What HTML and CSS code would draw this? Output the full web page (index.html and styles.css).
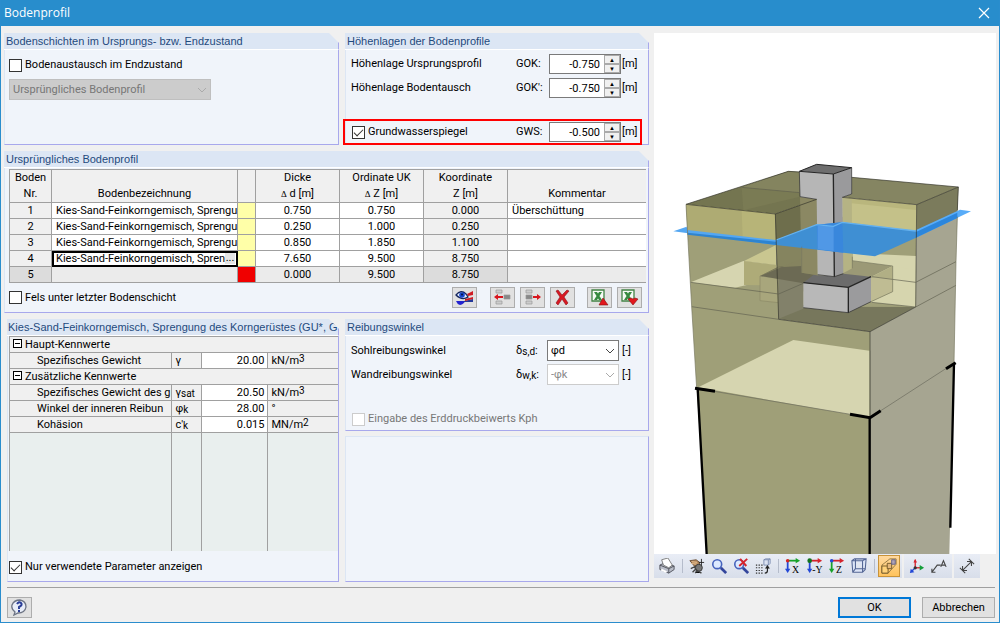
FILE: index.html
```html
<!DOCTYPE html>
<html lang="de">
<head>
<meta charset="utf-8">
<title>Bodenprofil</title>
<link rel="stylesheet" href="styles.css">
</head>
<body>
<div class="window">
  <header class="titlebar">
    <h1>Bodenprofil</h1>
    <button class="close" aria-label="Schließen"><svg width="12" height="12" viewBox="0 0 12 12"><path d="M1 1l10 10M11 1L1 11" stroke="#fff" stroke-width="1.2"/></svg></button>
  </header>

  <main class="content">
    <div class="settings">
      <div class="row row-top">
        <section class="panel">
          <h2>Bodenschichten im Ursprungs- bzw. Endzustand</h2>
          <div class="panel-body stack">
            <label class="check"><input type="checkbox">Bodenaustausch im Endzustand</label>
            <div class="dropdown profile-select">
              <select aria-label="Bodenprofil" disabled><option>Ursprüngliches Bodenprofil</option></select>
              <svg width="10" height="6" viewBox="0 0 10 6"><path d="M1 1l4 4 4-4"/></svg>
            </div>
          </div>
        </section>

        <section class="panel">
          <h2>Höhenlagen der Bodenprofile</h2>
          <div class="panel-body levels">
            <div class="field">
              <span>Höhenlage Ursprungsprofil</span>
              <label for="gok">GOK:</label>
              <div class="spin"><input id="gok" type="text" value="-0.750"><button aria-label="GOK erhöhen">▲</button><button aria-label="GOK verringern">▼</button></div>
              <span>[m]</span>
            </div>
            <div class="field">
              <span>Höhenlage Bodentausch</span>
              <label for="gok2">GOK':</label>
              <div class="spin"><input id="gok2" type="text" value="-0.750"><button aria-label="GOK' erhöhen">▲</button><button aria-label="GOK' verringern">▼</button></div>
              <span>[m]</span>
            </div>
            <div class="field marked">
              <label class="check"><input type="checkbox" checked>Grundwasserspiegel</label>
              <label for="gws">GWS:</label>
              <div class="spin"><input id="gws" type="text" value="-0.500"><button aria-label="GWS erhöhen">▲</button><button aria-label="GWS verringern">▼</button></div>
              <span>[m]</span>
            </div>
          </div>
        </section>
      </div>

      <section class="panel">
        <h2>Ursprüngliches Bodenprofil</h2>
        <div class="panel-body profile">
          <table class="layers">
            <colgroup><col class="c-nr"><col class="c-name"><col class="c-color"><col class="c-num"><col class="c-num"><col class="c-num"><col></colgroup>
            <thead>
              <tr><th>Boden<br>Nr.</th><th>Bodenbezeichnung</th><th></th><th>Dicke<br><i>Δ</i> d [m]</th><th>Ordinate UK<br><i>Δ</i> Z [m]</th><th>Koordinate<br>Z [m]</th><th>Kommentar</th></tr>
            </thead>
            <tbody>
              <tr><th>1</th><td class="name">Kies-Sand-Feinkorngemisch, Sprengu</td><td class="sand"></td><td>0.750</td><td>0.750</td><td class="locked">0.000</td><td class="note">Überschüttung</td></tr>
              <tr><th>2</th><td class="name">Kies-Sand-Feinkorngemisch, Sprengu</td><td class="sand"></td><td>0.250</td><td>1.000</td><td class="locked">0.250</td><td class="note"></td></tr>
              <tr><th>3</th><td class="name">Kies-Sand-Feinkorngemisch, Sprengu</td><td class="sand"></td><td>0.850</td><td>1.850</td><td class="locked">1.100</td><td class="note"></td></tr>
              <tr><th>4</th><td class="name current"><div><span>Kies-Sand-Feinkorngemisch, Spren</span><button aria-label="Boden auswählen">...</button></div></td><td class="sand"></td><td>7.650</td><td>9.500</td><td class="locked">8.750</td><td class="note"></td></tr>
              <tr class="last"><th>5</th><td></td><td class="rock"></td><td>0.000</td><td>9.500</td><td class="locked">8.750</td><td></td></tr>
            </tbody>
          </table>
          <div class="table-tools">
            <label class="check"><input type="checkbox">Fels unter letzter Bodenschicht</label>
            <div class="tools">
              <button class="tool" aria-label="Bodenschichten anzeigen"><svg width="19" height="17" viewBox="0 0 19 17"><path d="M1 12h9q-1 3-5 4-3-1-4-4z" fill="#2222d0"/><path d="M9 12l9-2v3H8z" fill="#24389a"/><path d="M12 5l6-3v4l-5 1zM10 10l8-2v2l-8 2z" fill="#d01c24"/><path d="M1 6q5-6 10-1l2 3q-6 4-12-2z" fill="#e8f3ff" stroke="#17275e" stroke-width="1.300"/><circle cx="7" cy="6" r="2.800" fill="#1745cf"/><circle cx="7" cy="5.500" r="1" fill="#061337"/></svg></button>
              <button class="tool gap-l" aria-label="Zeile einfügen"><svg width="19" height="17" viewBox="0 0 19 17"><g fill="#ccc" stroke="#999" stroke-width=".7"><path d="M3 1h6v3H3zM3 12h6v3H3z"/><path d="M11 6h6v4h-6z" fill="#888"/></g><path d="M1 8l4-3v2h5v2H5v2z" fill="#d8151d"/></svg></button>
              <button class="tool" aria-label="Zeile entfernen"><svg width="19" height="17" viewBox="0 0 19 17"><g fill="#ccc" stroke="#999" stroke-width=".7"><path d="M3 1h6v3H3zM3 12h6v3H3z"/><path d="M3 6h6v4H3z" fill="#888"/></g><path d="M18 8l-4-3v2h-4v2h4v2z" fill="#d8151d"/></svg></button>
              <button class="tool" aria-label="Löschen"><svg width="19" height="17" viewBox="0 0 19 17"><path d="M3 2l2-1 4 5 5-5 2 1-5 6 4 6-2 2-4-6-4 6-2-2 4-6z" fill="#d91822" stroke="#8b1118" stroke-width=".6"/></svg></button>
              <button class="tool gap-m" aria-label="Nach Excel exportieren"><svg width="19" height="17" viewBox="0 0 19 17"><path d="M2 1h12v11H2z" fill="#f6fbf5" stroke="#438346" stroke-width="1.300"/><path d="M4 3h3l5 8H9zM9 3h3l-5 8H4z" fill="#378a40"/><path d="M9 16l4-7 5 7z" fill="#e2171d" stroke="#861015" stroke-width=".6"/></svg></button>
              <button class="tool" aria-label="Aus Excel importieren"><svg width="19" height="17" viewBox="0 0 19 17"><path d="M2 1h12v11H2z" fill="#f6fbf5" stroke="#438346" stroke-width="1.300"/><path d="M4 3h3l5 8H9zM9 3h3l-5 8H4z" fill="#378a40"/><path d="M8 10l3-1 2 1 2-1 3 1-5 6z" fill="#e2171d" stroke="#861015" stroke-width=".6"/></svg></button>
            </div>
          </div>
        </div>
      </section>

      <div class="row row-bottom">
        <section class="panel params">
          <h2>Kies-Sand-Feinkorngemisch, Sprengung des Korngerüstes (GU*, GT</h2>
          <div class="panel-body">
            <table class="values">
              <colgroup><col><col class="v-sym"><col class="v-num"><col class="v-unit"></colgroup>
              <tbody>
                <tr><th colspan="4"><span class="minus"></span>Haupt-Kennwerte</th></tr>
                <tr><td>Spezifisches Gewicht</td><td class="sym">γ</td><td class="num">20.00</td><td>kN/m<sup>3</sup></td></tr>
                <tr><th colspan="4"><span class="minus"></span>Zusätzliche Kennwerte</th></tr>
                <tr><td>Spezifisches Gewicht des g</td><td class="sym">γ<sub>sat</sub></td><td class="num">20.50</td><td>kN/m<sup>3</sup></td></tr>
                <tr><td>Winkel der inneren Reibun</td><td class="sym">φ<sub>k</sub></td><td class="num">28.00</td><td>°</td></tr>
                <tr><td>Kohäsion</td><td class="sym">c'<sub>k</sub></td><td class="num">0.015</td><td>MN/m<sup>2</sup></td></tr>
                <tr class="rest"><td></td><td></td><td></td><td></td></tr>
              </tbody>
            </table>
            <label class="check"><input type="checkbox" checked>Nur verwendete Parameter anzeigen</label>
          </div>
        </section>

        <div class="side">
          <section class="panel friction">
            <h2>Reibungswinkel</h2>
            <div class="panel-body levels">
              <div class="field">
                <span>Sohlreibungswinkel</span>
                <label for="sd">δ<sub>s,d</sub>:</label>
                <div class="dropdown">
                  <select id="sd"><option>φd</option></select>
                  <svg width="10" height="6" viewBox="0 0 10 6"><path d="M1 1l4 4 4-4"/></svg>
                </div>
                <span>[-]</span>
              </div>
              <div class="field">
                <span>Wandreibungswinkel</span>
                <label for="wk">δ<sub>w,k</sub>:</label>
                <div class="dropdown">
                  <select id="wk" disabled><option>-φk</option></select>
                  <svg width="10" height="6" viewBox="0 0 10 6"><path d="M1 1l4 4 4-4"/></svg>
                </div>
                <span>[-]</span>
              </div>
              <label class="check kph"><input type="checkbox" disabled>Eingabe des Erddruckbeiwerts Kph</label>
            </div>
          </section>
          <section class="panel empty"></section>
        </div>
      </div>
    </div>

    <div class="preview">
      <svg class="model" viewBox="12 -348 1026 1560" preserveAspectRatio="xMidYMax meet" role="img" aria-label="3D-Ansicht des Fundaments im Boden">
        <path fill="#9f9f78" d="M108 163L376 192 386 508 660 545V1212H172L140 715 125 470z"/>
        <path fill="#a6a591" d="M660 545L797 471 800 164 925 111 918 335 912 640 898 1212H660z"/>
        <path fill="#7b7b5c" d="M800 164L925 111 922 195 800 250z"/>
        <path fill="#d6d5b0" d="M122 397L280 333 385 345V383L255 413z"/>
        <path fill="#9f9f78" d="M577 200L798 230V471L386 508V290z"/>
        <path fill="#d6d5ae" d="M608 309L798 318V471L665 457 608 420z"/>
        <path fill="#77775c" d="M386 420L470 470 797 471 660 545 386 508z"/>
        <path fill="#d6d5ae" d="M728 348L797 360V471L665 456 728 425z"/>
        <path fill="#747550" d="M108 163L415 64 450 66V140L500 148 376 192z"/>
        <path fill="#84845f" d="M275 112L415 64 450 66V128z"/>
        <path fill="#7f7e57" d="M275 112L450 128V140L280 181z" opacity=".6"/>
        <path fill="#858562" d="M605 82L925 111 800 164 577 142 605 132z"/>
        <path fill="#aeab73" d="M108 163L376 192V272L112 245z"/>
        <path fill="#b7b478" d="M275 181L376 192V272L278 262z"/>
        <path fill="#b9b67d" d="M577 142L800 164V245L577 217z"/>
        <path fill="#c4c189" d="M605 160L798 180V243L605 218z"/>
        <path fill="#c9c690" d="M282 333L378 285V345z"/>
        <path fill="#aeab78" d="M282 333L380 345V377L330 379V406L282 405z"/>
        <path fill="#85845f" d="M376 192L500 148V380L386 508z"/>
        <path fill="#6e6e4c" d="M376 192L500 148V225L378 272z"/>
        <path fill="#a8a67c" d="M330 378L385 384V458L330 452z" stroke="#8b8966" stroke-width="2"/>
        <path fill="#82816a" d="M385 384L460 397V476L386 506z"/>
        <path fill="#6c6a54" d="M330 378L385 350 455 346V368L500 375 460 400z"/>
        <path fill="#85835f" d="M330 378L455 326V348L385 352z"/>
        <path fill="#9b9976" d="M606 332L728 348 663 381 555 374z"/>
        <path fill="#b1af85" d="M663 381L728 348V425L663 455z"/>
        <path fill="#c4c298" d="M675 380L728 386V425L663 455V384z" opacity=".7"/>
        <path fill="#b8b8b8" d="M460 398L595 412V488L460 473z"/>
        <path fill="#9b9b9d" d="M595 412L663 380V455L595 488z"/>
        <path fill="#6c6c6c" d="M490 375L553 379 580 371 663 380 595 412 460 398z"/>
        <path fill="#8b8863" d="M450 140L500 148 503 376 455 368z"/>
        <path fill="#b5b384" d="M577 142L605 150 607 355 579 370z"/>
        <path fill="#b6b6b6" d="M448 64L550 72 553 380 503 375 500 148 450 141z"/>
        <path fill="#9a9a9c" d="M550 72L605 53V132L577 142 580 370 553 380z"/>
        <path fill="#6e6e6e" stroke="#252525" stroke-width="3" d="M448 64L500 43 605 53 550 72z"/>
        <g fill="none" stroke="#252525" stroke-width="4"><path d="M550 72L553 380M460 398L595 412 663 380M595 412V488"/><path stroke-width="2" d="M448 64L450 140 500 148M605 53V132L577 142M503 374L553 380 580 371M460 473L595 488 663 455"/></g>
        <path fill="#54a7f2" d="M70 244L110 230 112 240 378 270V285z"/>
        <path fill="#2e84d0" d="M112 248L378 275V285L112 254z"/>
        <path fill="#3f8fd3" d="M378 270L500 224 577 217 798 243V263L675 319 378 285z"/>
        <path fill="#3987dc" d="M500 224L577 217 580 308 503 298z"/>
        <path fill="#5098e6" d="M503 228H551V303L503 298z"/>
        <path fill="#58acf8" d="M798 240L930 179 963 184 798 263z"/>
        <path fill="#2c86dc" d="M798 246L922 188V204L798 263z"/>
        <path fill="none" stroke="#65b2f0" stroke-width="4" d="M378 270L500 224 550 229 577 217 798 243"/>
        <g fill="none" stroke="#33332a" stroke-width="2">
          <path d="M108 163L376 192 500 148M108 163L415 64 448 66M605 82L925 111 800 164 577 142M376 192L386 508M800 164L797 471M925 111L922 180M386 508L660 545 797 471"/>
          <path stroke="#606050" d="M122 397L386 432 460 400M125 470L386 508M797 397L918 335M797 471L918 406M275 112L450 128M665 380L797 397M665 457L797 471"/>
          <path stroke="#77775f" d="M108 163L125 470 140 715M922 200L918 335 912 640M455 368V290M607 355V320M606 332L728 348V425L663 455"/>
          <path d="M660 545V800"/>
        </g>
        <path fill="#d6d5b0" d="M145 712L430 570 658 602V803z"/>
        <path fill="none" stroke="#69695c" stroke-width="2" d="M140 715L660 803 912 640M660 602V803"/>
        <path fill="none" stroke="#000" stroke-width="7" d="M143 715L170 1212M659 800V1212M912 640L901 1133"/>
        <path fill="none" stroke="#000" stroke-width="9" d="M135 715L195 724M600 793L660 803 692 782M888 656L917 638"/>
      </svg>
      <div class="viewbars">
        <div class="viewbar">
          <button aria-label="Drucken"><svg viewBox="0 0 18 18"><path d="M1 8l4-2 12 3v4l-6 4L1 13z" fill="#b9bdc8" stroke="#4a4d56"/><path d="M1 8l10 4v5M11 12l6-3" fill="none" stroke="#4a4d56"/><path d="M5 8L3 2l7-2 5 8-4 3z" fill="#fff" stroke="#777"/><path d="M3 12l6 3-1 2-6-3z" fill="#fff"/></svg></button>
          <i class="sep"></i>
          <button aria-label="Verschieben"><svg viewBox="0 0 18 18"><path d="M1 3l7-1 4 3-1 5-5-1z" fill="#b98d5f" stroke="#65482f"/><path d="M3 4l6 1M2 6l7 1" stroke="#e4bd91"/><path d="M14 1v9M11 5h6" stroke="#222"/><circle cx="11" cy="11" r="4" fill="#777" stroke="#333"/><path d="M6 10l4 6M2 12l6-3M7 17l2-3 5 3M4 16l3-3" stroke="#444" stroke-width="1.500"/></svg></button>
          <button aria-label="Zoom"><svg viewBox="0 0 18 18"><path d="M11 11l6 6" stroke="#33459c" stroke-width="3"/><circle cx="7" cy="7" r="5" fill="#dce9ff" stroke="#4663bd" stroke-width="1.800"/></svg></button>
          <button aria-label="Zoom zurücksetzen"><svg viewBox="0 0 18 18"><path d="M11 11l6 6" stroke="#33459c" stroke-width="3"/><circle cx="7" cy="7" r="5" fill="#dce9ff" stroke="#4663bd" stroke-width="1.800"/><path d="M8 1l7 8M16 1L7 9" stroke="#d5242c" stroke-width="2.200"/></svg></button>
          <button aria-label="Raster"><svg viewBox="0 0 18 18"><path d="M1 8h8M1 11h8M1 14h8M1 17h8" stroke="#333" stroke-width="1.200" stroke-dasharray="1.500 1.500"/><path d="M10 2l2-1h5v5l-2 2h-5zM10 2h5v6M15 2l2-1" fill="#dbe2f2" stroke="#7788ae"/><path d="M14 10v4q0 3-3 3M12 12l2-3 2 3" fill="none" stroke="#222" stroke-width="1.300"/></svg></button>
          <i class="sep"></i>
          <button aria-label="Ansicht in X"><svg viewBox="0 0 18 18"><path d="M3 3h10" stroke="#18a22b" stroke-width="2"/><path d="M12 0l5 3-5 3z" fill="#18a22b"/><path d="M3 3v10" stroke="#2348d6" stroke-width="2"/><path d="M0 12l3 5 3-5z" fill="#2348d6"/><circle cx="3" cy="3" r="2" fill="#d62323"/><text x="8" y="17">X</text></svg></button>
          <button aria-label="Ansicht in -Y"><svg viewBox="0 0 18 18"><path d="M3 3h10" stroke="#d6232d" stroke-width="2"/><path d="M12 0l5 3-5 3z" fill="#d6232d"/><path d="M3 3v10" stroke="#2348d6" stroke-width="2"/><path d="M0 12l3 5 3-5z" fill="#2348d6"/><circle cx="3" cy="3" r="2.600" fill="#12731d"/><text x="6" y="17">-Y</text></svg></button>
          <button aria-label="Ansicht in Z"><svg viewBox="0 0 18 18"><path d="M3 3h10" stroke="#d6232d" stroke-width="2"/><path d="M12 0l5 3-5 3z" fill="#d6232d"/><path d="M3 3v10" stroke="#18a22b" stroke-width="2"/><path d="M0 12l3 5 3-5z" fill="#18a22b"/><circle cx="3" cy="3" r="2" fill="#2348d6"/><text x="8" y="17">Z</text></svg></button>
          <button aria-label="Isometrie"><svg viewBox="0 0 18 18"><path d="M1 3l3-2h13l-1 12-3 3H2zM1 3h12l4-2M13 3v13M5 1v11h11M5 12l-3 4" fill="#dce5f7" stroke="#536594" stroke-width="1.200"/></svg></button>
          <i class="sep"></i>
          <button class="active" aria-label="Transparente Darstellung"><svg viewBox="0 0 18 18"><path d="M1 8l9-7h7v6l-9 10H1z" fill="none" stroke="#8c7340"/><path d="M1 9h7v8H1z" fill="#ffd27a" stroke="#6e5425"/><path d="M7 6h5v6H7z" fill="#e5b87c" stroke="#6e5425"/><path d="M12 2h4v5h-4z" fill="#b1a4b5" stroke="#5c5c8a"/></svg></button>
        </div>
        <div class="viewbar">
          <button aria-label="Achsen"><svg viewBox="0 0 18 18"><path d="M7 11V2" stroke="#d6232d" stroke-width="1.500"/><path d="M5 5l2-4 2 4z" fill="#d6232d"/><path d="M7 11h7" stroke="#d6232d" stroke-width="1.500"/><path d="M12 8l5 3-5 3z" fill="#159e3b"/><path d="M7 11l-4 4" stroke="#2348d6" stroke-width="1.500"/><path d="M1 17l1-5 4 4z" fill="#2348d6"/><circle cx="7" cy="11" r="1.800" fill="#333"/></svg></button>
          <button aria-label="Beschriftung"><svg viewBox="0 0 18 18"><path d="M1 16l6-8h4M1 12v4h4" fill="none" stroke="#444" stroke-width="1.300"/><path d="M11 10l3-7 3 7M12 8h4" fill="none" stroke="#444" stroke-width="1.200"/></svg></button>
        </div>
        <div class="viewbar">
          <button aria-label="Bemaßung"><svg viewBox="0 0 18 18"><path d="M4 14L14 4M4 9v5h5M9 4h5v5M1 11l6 6M11 1l6 6" fill="none" stroke="#444" stroke-width="1.200"/></svg></button>
        </div>
      </div>
    </div>
  </main>

  <footer class="footer">
    <button class="tool" aria-label="Hilfe"><svg width="19" height="17" viewBox="0 0 19 17"><path d="M4 16l1-3q-4-3-3-7 2-5 8-5 6 1 6 7-1 6-8 6z" fill="#e8edf8" stroke="#6d7484" stroke-width="1.300"/><path d="M7 5q2-3 4-1t-2 4v2M9 11v2" fill="none" stroke="#2a3e97" stroke-width="2"/></svg></button>
    <div class="actions">
      <button class="ok">OK</button>
      <button>Abbrechen</button>
    </div>
  </footer>
</div>
</body>
</html>
```
FILE: styles.css
```css
* { box-sizing: border-box; }

body {
  margin: 0;
  font: 11px/14px Roboto, "Liberation Sans", sans-serif;
  color: #000;
  background: #f0f0f0;
}

button, input, select { font: inherit; color: inherit; margin: 0; border-radius: 0; }
button { padding: 0; }
h1, h2 { margin: 0; font-weight: 400; }
svg { display: block; }

.window {
  display: flex;
  flex-direction: column;
  min-height: 100vh;
  border: 1px solid #2a8dcd;
  border-top: 0;
}

.titlebar {
  display: flex;
  align-items: center;
  justify-content: space-between;
  height: 26px;
  padding: 0 9px 0 3px;
  color: #fff;
  background: #288dcc;
}
.titlebar h1 { font: 12px/16px "Open Sans", sans-serif; }
.close { border: 0; background: none; }

.content {
  flex: 1;
  display: grid;
  grid-template-columns: minmax(0, 645fr) minmax(0, 342fr);
  gap: 5px;
  padding: 7px 3px 5px;
}
.settings { display: flex; flex-direction: column; gap: 6px; }
.row { display: grid; gap: 6px; }
.row-top { grid-template-columns: minmax(0, 335fr) minmax(0, 304fr); }
.row-bottom { flex: 1; grid-template-columns: minmax(0, 335fr) minmax(0, 304fr); }
.side { display: flex; flex-direction: column; gap: 5px; }

.panel { display: flex; flex-direction: column; min-width: 0; }
.panel h2 {
  height: 17px;
  padding: 0 3px 0 2px;
  overflow: hidden;
  font: 11px/17px "Liberation Sans", sans-serif;
  white-space: nowrap;
  color: #1f4a7d;
  background: #dce6f4;
  border-right: 1px solid #a8a8ec;
  border-bottom: 1px solid #fff;
  clip-path: polygon(0 0, calc(100% - 10px) 0, 100% 10px, 100% 100%, 0 100%);
}
.panel-body {
  flex: 1;
  background: #f0f4fa;
  border: solid #a8a8ec;
  border-width: 0 1px 1px 0;
  border-left: 1px solid #dce6f4;
}
.empty { flex: 1; background: #f0f4fa; border: 1px solid #a8a8ec; border-top-color: #dce6f4; border-left-color: #dce6f4; }

.stack { display: flex; flex-direction: column; gap: 7px; padding: 8px 4px; }
.check { display: flex; align-items: center; gap: 3px; white-space: nowrap; }
.check input, .minus { flex: none; appearance: none; }
.check input { width: 13px; height: 13px; border: 1px solid #333; background: #fff; display: grid; place-items: center; }
.check input:checked::before { content: ""; width: 8px; height: 4px; border: solid #333; border-width: 0 0 1px 1px; rotate: -45deg; margin-bottom: 2px; }
.check input:disabled { border-color: #ccc; }
.check:has(input:disabled) { color: #777; }

.dropdown { position: relative; height: 21px; }
.dropdown select {
  display: block;
  width: 100%;
  height: 100%;
  padding: 0 3px;
  appearance: none;
  border: 1px solid #7a7a7a;
  background: #fff;
}
.dropdown svg { position: absolute; right: 4px; top: 8px; fill: none; stroke: #444; pointer-events: none; }
.dropdown select:disabled { color: #888; opacity: 1; border-color: #ccc; }
.dropdown select:disabled + svg { stroke: #aaa; }
.profile-select { width: 62%; }
.profile-select select:disabled { color: #777; background: #ccc; border-color: #bfbfbf; }

.levels { display: flex; flex-direction: column; gap: 4px; padding: 4px 0 2px 5px; }
.field { display: grid; grid-template-columns: 1fr 33px 72px 27px; align-items: center; }
.field > :last-child { padding-left: 1px; }
.marked { margin: 20px 9px 0 -5px; padding-left: 5px; outline: 2px solid #f00; outline-offset: 1px; grid-template-columns: 1fr 33px 72px 18px; }
.levels .check { padding-left: 1px; }
.spin {
  display: grid;
  grid-template-columns: 1fr 16px;
  grid-template-rows: 9px 9px;
  height: 20px;
  border: 1px solid #7a7a7a;
  background: #f0f0f0;
}
.spin input { grid-row: 1 / 3; width: 100%; height: 18px; padding: 0 4px; border: 0; text-align: right; background: #fff; }
.spin button { border: 1px solid #aaa; background: #f0f0f0; font-size: 6px; line-height: 6px; overflow: hidden; }

table { border-collapse: collapse; table-layout: fixed; width: 100%; }
.profile { padding: 1px 2px 4px 4px; }
.layers { background: #fff; }
.layers th, .layers td { height: 16px; padding: 0; border: 1px solid #a0a0a0; font-weight: 400; text-align: center; line-height: 15px; white-space: nowrap; overflow: hidden; }
.layers tr > :last-child { border-right: 0; }
.layers th { background: #f0f0f0; }
.layers thead th { height: 33px; vertical-align: bottom; line-height: 16px; }
.layers i { font: 9px "Liberation Serif", serif; }
.layers .name, .layers .note { text-align: left; padding-left: 4px; }
.layers .locked { background: #f0f0f0; }
.layers .sand { background: #ffffa8; }
.layers .last td { background: #ebebeb; }
.layers .last th, .layers .last .locked { background: #dcdcdc; }
.layers .last .rock { background: #f00000; }
.layers .current { outline: 2px solid #000; outline-offset: -2px; }
.current div { display: flex; padding-right: 2px; }
.current span { flex: 1; }
.current button { width: 11px; height: 13px; border: 0; background: #e4e4e4; line-height: 8px; }
.c-nr { width: 42px; }
.c-name { width: 186px; }
.c-color { width: 18px; }
.c-num { width: 84px; }

.table-tools, .tools { display: flex; align-items: center; }
.table-tools { justify-content: space-between; padding: 4px 4px 0 0; }
.tools { gap: 5px; }
.tool { display: grid; place-items: center; width: 25px; height: 21px; border: 1px solid #adadad; background: #e1e1e1; }
.gap-l { margin-left: 8px; }
.gap-m { margin-left: 7px; }

.params { margin-left: 3px; }
.params h2 { padding: 0 0 0 1px; }
.params .panel-body { display: flex; flex-direction: column; justify-content: space-between; }
.values { margin-left: 1px; width: calc(100% - 1px); }
.values th, .values td { height: 16px; padding: 0 3px; border: 1px solid #a0a0a0; border-right: 0; background: #f0f0f0; font-weight: 400; text-align: left; line-height: 15px; white-space: nowrap; overflow: hidden; }
.values td:first-child { padding-left: 27px; }
.values .num { text-align: right; background: #fff; }
.values .rest td { height: 118px; background: #e9efee; border-bottom: 0; }
.v-sym { width: 30px; }
.v-num { width: 66px; }
.v-unit { width: 70px; }
.minus { display: inline-block; width: 9px; height: 9px; margin-right: 3px; border: 1px solid #000; background: linear-gradient(#000, #000) center / 5px 1px no-repeat #fff; }
sub, sup { font-size: 10px; line-height: 0; }
sub { vertical-align: -1px; }
sup { vertical-align: 2px; }
.params .check { padding: 0 0 7px 1px; }

.friction .field { grid-template-columns: 1fr 31px 72px 29px; }
.friction .field > :last-child { padding-left: 3px; }
.friction .levels { gap: 3px; }
.kph { margin: 24px 0 2px; }

.preview { display: flex; flex-direction: column; padding-bottom: 4px; }
.model { flex: 1; min-height: 0; width: 100%; background: #fff; }
.viewbars { display: flex; gap: 2px; }
.viewbar { display: flex; align-items: center; height: 24px; padding: 0 2px; background: linear-gradient(#e9edf6, #d8deea); }
.viewbar button { display: grid; place-items: center; width: 22px; height: 22px; border: 0; background: none; }
.viewbar svg { width: 16px; height: 16px; }
.viewbar text { font: 11px "Liberation Serif", serif; }
.viewbar .active { border: 1px solid #c8933a; background: linear-gradient(#ffd9a0, #ffc35c); }
.sep { width: 1px; height: 14px; margin: 0 3px 0 4px; background: #b5bccb; }

.footer {
  display: flex;
  justify-content: space-between;
  margin: 0 4px 0 6px;
  padding: 9px 0 4px;
  border-top: 1px solid #a0a0a0;
}
.actions { display: flex; gap: 11px; }
.actions button { width: 73px; height: 21px; border: 1px solid #adadad; background: #e1e1e1; font-size: 11px; }
.actions .ok { border: 2px solid #0078d7; }
```
